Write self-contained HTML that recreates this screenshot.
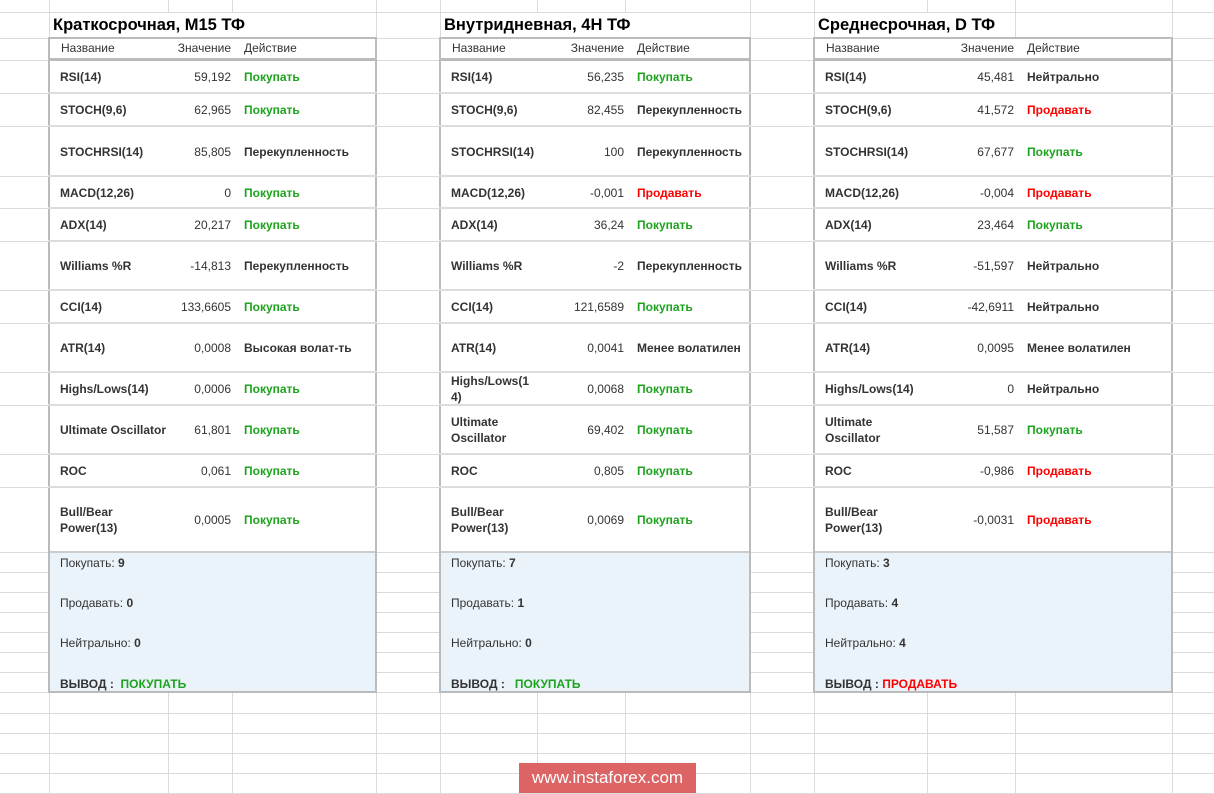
<!DOCTYPE html>
<html><head><meta charset="utf-8"><style>
*{box-sizing:border-box;margin:0;padding:0}
body{width:1214px;height:794px;position:relative;overflow:hidden;background:#fff;font-family:"Liberation Sans",Arial,sans-serif;font-size:12px;color:#333}
.h{position:absolute;left:0;width:1214px;height:1px;background:#dadada}
.vl{position:absolute;top:0;width:1px;height:794px;background:#dadada}
.t{position:absolute;top:0;height:794px}
.box{position:absolute;left:0;top:37px;height:656px;width:100%;border:2px solid #bbb;background:#fff}
.title{position:absolute;top:13px;left:5px;font-size:16.5px;font-weight:bold;color:#000;background:#fff;height:24px;line-height:24px;padding-right:6px}
.hd{position:absolute;top:39px;height:19px;left:0;width:100%;line-height:19px;font-size:12px;color:#333}
.hb{position:absolute;top:58px;left:0;width:100%;height:3px;background:#bbb}
.r{position:absolute;left:0;width:100%;border-top:2px solid #dcdcdc}
.r span{position:absolute;top:50%;transform:translateY(-50%);line-height:16px}
.n{font-weight:bold;color:#333;left:12px;width:80px}
.v{text-align:right}
.a{font-weight:bold}
.g{color:#1ea31e}.rd{color:#f00}.k{color:#333}
.sum{position:absolute;left:2px;right:2px;top:551px;height:140px;background:#ebf3fa;border-top:2px solid #ccc}
.sum div{position:absolute;left:10px;line-height:16px}
.sum b{color:#333}
.wm{position:absolute;left:519px;top:763px;width:177px;height:30px;background:#dd6464;color:#fff;font-size:17px;text-align:center;line-height:30px}
</style></head><body>
<div class="h" style="top:12px"></div><div class="h" style="top:38px"></div><div class="h" style="top:60px"></div><div class="h" style="top:93px"></div><div class="h" style="top:126px"></div><div class="h" style="top:176px"></div><div class="h" style="top:208px"></div><div class="h" style="top:241px"></div><div class="h" style="top:290px"></div><div class="h" style="top:323px"></div><div class="h" style="top:372px"></div><div class="h" style="top:405px"></div><div class="h" style="top:454px"></div><div class="h" style="top:487px"></div><div class="h" style="top:552px"></div><div class="h" style="top:572px"></div><div class="h" style="top:592px"></div><div class="h" style="top:612px"></div><div class="h" style="top:632px"></div><div class="h" style="top:652px"></div><div class="h" style="top:672px"></div><div class="h" style="top:692px"></div><div class="h" style="top:713px"></div><div class="h" style="top:733px"></div><div class="h" style="top:753px"></div><div class="h" style="top:773px"></div><div class="h" style="top:793px"></div>
<div class="vl" style="left:49px"></div><div class="vl" style="left:168px"></div><div class="vl" style="left:232px"></div><div class="vl" style="left:376px"></div><div class="vl" style="left:440px"></div><div class="vl" style="left:537px"></div><div class="vl" style="left:625px"></div><div class="vl" style="left:750px"></div><div class="vl" style="left:814px"></div><div class="vl" style="left:927px"></div><div class="vl" style="left:1015px"></div><div class="vl" style="left:1172px"></div>

<!-- Table 1 -->
<div class="t" style="left:48px;width:329px">
<div class="title" style="top:13px">Краткосрочная, M15 ТФ</div>
<div class="box"></div>
<div class="hd"><span style="position:absolute;left:13px">Название</span><span style="position:absolute;right:146px">Значение</span><span style="position:absolute;left:196px">Действие</span></div>
<div class="hb"></div>
<div class="r" style="top:61px;height:32px;border-top:0"><span class="n">RSI(14)</span><span class="v" style="right:146px">59,192</span><span class="a g" style="left:196px">Покупать</span></div>
<div class="r" style="top:92px;height:34px"><span class="n">STOCH(9,6)</span><span class="v" style="right:146px">62,965</span><span class="a g" style="left:196px">Покупать</span></div>
<div class="r" style="top:125px;height:51px"><span class="n" style="width:120px">STOCHRSI(14)</span><span class="v" style="right:146px">85,805</span><span class="a k" style="left:196px">Перекупленность</span></div>
<div class="r" style="top:175px;height:33px"><span class="n" style="width:120px">MACD(12,26)</span><span class="v" style="right:146px">0</span><span class="a g" style="left:196px">Покупать</span></div>
<div class="r" style="top:207px;height:34px"><span class="n">ADX(14)</span><span class="v" style="right:146px">20,217</span><span class="a g" style="left:196px">Покупать</span></div>
<div class="r" style="top:240px;height:50px"><span class="n" style="width:120px">Williams %R</span><span class="v" style="right:146px">-14,813</span><span class="a k" style="left:196px">Перекупленность</span></div>
<div class="r" style="top:289px;height:34px"><span class="n">CCI(14)</span><span class="v" style="right:146px">133,6605</span><span class="a g" style="left:196px">Покупать</span></div>
<div class="r" style="top:322px;height:50px"><span class="n">ATR(14)</span><span class="v" style="right:146px">0,0008</span><span class="a k" style="left:196px">Высокая волат-ть</span></div>
<div class="r" style="top:371px;height:34px"><span class="n" style="width:120px">Highs/Lows(14)</span><span class="v" style="right:146px">0,0006</span><span class="a g" style="left:196px">Покупать</span></div>
<div class="r" style="top:404px;height:50px"><span class="n" style="width:130px">Ultimate Oscillator</span><span class="v" style="right:146px">61,801</span><span class="a g" style="left:196px">Покупать</span></div>
<div class="r" style="top:453px;height:34px"><span class="n">ROC</span><span class="v" style="right:146px">0,061</span><span class="a g" style="left:196px">Покупать</span></div>
<div class="r" style="top:486px;height:66px"><span class="n">Bull/Bear<br>Power(13)</span><span class="v" style="right:146px">0,0005</span><span class="a g" style="left:196px">Покупать</span></div>
<div class="sum"><div style="top:2px">Покупать: <b>9</b></div><div style="top:42px">Продавать: <b>0</b></div><div style="top:82px">Нейтрально: <b>0</b></div><div style="top:123px"><b>ВЫВОД :</b>&nbsp; <b class="g" style="color:#1ea31e">ПОКУПАТЬ</b></div></div>
</div>

<!-- Table 2 -->
<div class="t" style="left:439px;width:312px">
<div class="title" style="top:13px">Внутридневная, 4H ТФ</div>
<div class="box"></div>
<div class="hd"><span style="position:absolute;left:13px">Название</span><span style="position:absolute;right:127px">Значение</span><span style="position:absolute;left:198px">Действие</span></div>
<div class="hb"></div>
<div class="r" style="top:61px;height:32px;border-top:0"><span class="n">RSI(14)</span><span class="v" style="right:127px">56,235</span><span class="a g" style="left:198px">Покупать</span></div>
<div class="r" style="top:92px;height:34px"><span class="n">STOCH(9,6)</span><span class="v" style="right:127px">82,455</span><span class="a k" style="left:198px">Перекупленность</span></div>
<div class="r" style="top:125px;height:51px"><span class="n" style="width:120px">STOCHRSI(14)</span><span class="v" style="right:127px">100</span><span class="a k" style="left:198px">Перекупленность</span></div>
<div class="r" style="top:175px;height:33px"><span class="n" style="width:120px">MACD(12,26)</span><span class="v" style="right:127px">-0,001</span><span class="a rd" style="left:198px">Продавать</span></div>
<div class="r" style="top:207px;height:34px"><span class="n">ADX(14)</span><span class="v" style="right:127px">36,24</span><span class="a g" style="left:198px">Покупать</span></div>
<div class="r" style="top:240px;height:50px"><span class="n" style="width:120px">Williams %R</span><span class="v" style="right:127px">-2</span><span class="a k" style="left:198px">Перекупленность</span></div>
<div class="r" style="top:289px;height:34px"><span class="n">CCI(14)</span><span class="v" style="right:127px">121,6589</span><span class="a g" style="left:198px">Покупать</span></div>
<div class="r" style="top:322px;height:50px"><span class="n">ATR(14)</span><span class="v" style="right:127px">0,0041</span><span class="a k" style="left:198px">Менее волатилен</span></div>
<div class="r" style="top:371px;height:34px"><span class="n" style="width:90px">Highs/Lows(1<br>4)</span><span class="v" style="right:127px">0,0068</span><span class="a g" style="left:198px">Покупать</span></div>
<div class="r" style="top:404px;height:50px"><span class="n">Ultimate<br>Oscillator</span><span class="v" style="right:127px">69,402</span><span class="a g" style="left:198px">Покупать</span></div>
<div class="r" style="top:453px;height:34px"><span class="n">ROC</span><span class="v" style="right:127px">0,805</span><span class="a g" style="left:198px">Покупать</span></div>
<div class="r" style="top:486px;height:66px"><span class="n">Bull/Bear<br>Power(13)</span><span class="v" style="right:127px">0,0069</span><span class="a g" style="left:198px">Покупать</span></div>
<div class="sum"><div style="top:2px">Покупать: <b>7</b></div><div style="top:42px">Продавать: <b>1</b></div><div style="top:82px">Нейтрально: <b>0</b></div><div style="top:123px"><b>ВЫВОД :</b>&nbsp;&nbsp; <b style="color:#1ea31e">ПОКУПАТЬ</b></div></div>
</div>

<!-- Table 3 -->
<div class="t" style="left:813px;width:360px">
<div class="title" style="top:13px">Среднесрочная, D ТФ</div>
<div class="box"></div>
<div class="hd"><span style="position:absolute;left:13px">Название</span><span style="position:absolute;right:159px">Значение</span><span style="position:absolute;left:214px">Действие</span></div>
<div class="hb"></div>
<div class="r" style="top:61px;height:32px;border-top:0"><span class="n">RSI(14)</span><span class="v" style="right:159px">45,481</span><span class="a k" style="left:214px">Нейтрально</span></div>
<div class="r" style="top:92px;height:34px"><span class="n">STOCH(9,6)</span><span class="v" style="right:159px">41,572</span><span class="a rd" style="left:214px">Продавать</span></div>
<div class="r" style="top:125px;height:51px"><span class="n" style="width:120px">STOCHRSI(14)</span><span class="v" style="right:159px">67,677</span><span class="a g" style="left:214px">Покупать</span></div>
<div class="r" style="top:175px;height:33px"><span class="n" style="width:120px">MACD(12,26)</span><span class="v" style="right:159px">-0,004</span><span class="a rd" style="left:214px">Продавать</span></div>
<div class="r" style="top:207px;height:34px"><span class="n">ADX(14)</span><span class="v" style="right:159px">23,464</span><span class="a g" style="left:214px">Покупать</span></div>
<div class="r" style="top:240px;height:50px"><span class="n" style="width:120px">Williams %R</span><span class="v" style="right:159px">-51,597</span><span class="a k" style="left:214px">Нейтрально</span></div>
<div class="r" style="top:289px;height:34px"><span class="n">CCI(14)</span><span class="v" style="right:159px">-42,6911</span><span class="a k" style="left:214px">Нейтрально</span></div>
<div class="r" style="top:322px;height:50px"><span class="n">ATR(14)</span><span class="v" style="right:159px">0,0095</span><span class="a k" style="left:214px">Менее волатилен</span></div>
<div class="r" style="top:371px;height:34px"><span class="n" style="width:120px">Highs/Lows(14)</span><span class="v" style="right:159px">0</span><span class="a k" style="left:214px">Нейтрально</span></div>
<div class="r" style="top:404px;height:50px"><span class="n">Ultimate<br>Oscillator</span><span class="v" style="right:159px">51,587</span><span class="a g" style="left:214px">Покупать</span></div>
<div class="r" style="top:453px;height:34px"><span class="n">ROC</span><span class="v" style="right:159px">-0,986</span><span class="a rd" style="left:214px">Продавать</span></div>
<div class="r" style="top:486px;height:66px"><span class="n">Bull/Bear<br>Power(13)</span><span class="v" style="right:159px">-0,0031</span><span class="a rd" style="left:214px">Продавать</span></div>
<div class="sum"><div style="top:2px">Покупать: <b>3</b></div><div style="top:42px">Продавать: <b>4</b></div><div style="top:82px">Нейтрально: <b>4</b></div><div style="top:123px"><b>ВЫВОД :</b> <b style="color:#f00">ПРОДАВАТЬ</b></div></div>
</div>

<div class="wm">www.instaforex.com</div>
</body></html>
